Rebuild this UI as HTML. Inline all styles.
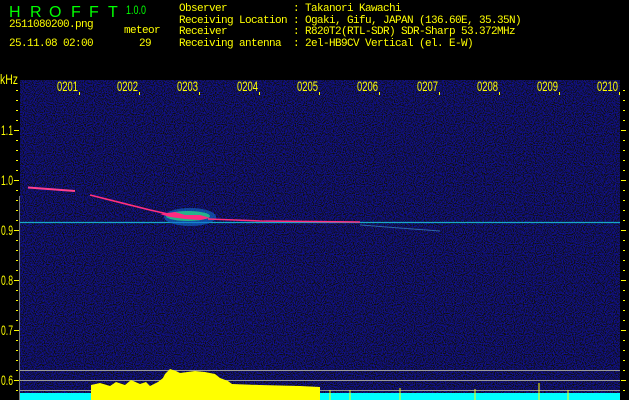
<!DOCTYPE html>
<html><head><meta charset="utf-8"><style>
html,body{margin:0;padding:0;background:#000;width:629px;height:400px;overflow:hidden}
body{position:relative;font-family:"Liberation Mono","DejaVu Sans Mono",monospace;color:#ff0;font-size:11px;letter-spacing:-0.6px}
.t{position:absolute;white-space:pre;line-height:11.5px}
</style></head><body>
<svg width="629" height="400" style="position:absolute;left:0;top:0">
<defs>
<filter id="n" x="0" y="0" width="100%" height="100%">
<feTurbulence type="fractalNoise" baseFrequency="0.9" numOctaves="1" seed="3"/>
<feColorMatrix type="matrix" values="0 0 0 0 0.01  0 0 0 0 0.01  0 0 0 2.8 -1.1  0 0 0 0 1"/>
</filter>
</defs>
<rect x="20" y="80" width="600" height="320" fill="#030318"/>
<rect x="20" y="80" width="600" height="320" filter="url(#n)" opacity="0.6"/>
<line x1="20" y1="222.5" x2="620" y2="222.5" stroke="#1ad0e0" stroke-width="1.2" opacity="0.8"/>
<polyline points="28,187.5 75,191" stroke="#ff4090" stroke-width="2" fill="none"/>
<polyline points="90,195 150,210 168,214" stroke="#ff3080" stroke-width="1.6" fill="none"/>
<ellipse cx="190" cy="217" rx="26" ry="9" fill="#1070d0" opacity="0.6"/>
<ellipse cx="188" cy="216" rx="22" ry="5" fill="#30e080" opacity="0.7"/>
<polygon points="160,214 175,212 185,215 200,215 210,218 200,220 185,219 170,217" fill="#ff2a80"/>
<polyline points="208,219 260,221 360,222" stroke="#ff3080" stroke-width="1.5" fill="none"/>
<polyline points="360,225 440,231" stroke="#40a0e0" stroke-width="1" fill="none" opacity="0.6"/>
<line x1="20" y1="370.5" x2="620" y2="370.5" stroke="#999"/>
<line x1="20" y1="380.5" x2="620" y2="380.5" stroke="#999"/>
<line x1="20" y1="390.5" x2="620" y2="390.5" stroke="#999"/>
<line x1="19.5" y1="196" x2="19.5" y2="400" stroke="#777"/>
<rect x="20" y="393" width="600" height="7" fill="#0ff"/>
<polygon fill="#ff0" points="91,400 91,385 100,383 110,386 116,382 125,385 131,380 140,384 146,382 150,386 158,382 163,378 165,374 170,369 176,371 180,373 195,371 205,372 215,374 220,378 228,381 232,384 260,385 300,386 320,387 320,400"/>
<g stroke="#ff0"><line x1="330" y1="390" x2="330" y2="400"/><line x1="350" y1="390" x2="350" y2="400"/><line x1="400" y1="388" x2="400" y2="400"/><line x1="475" y1="389" x2="475" y2="400"/><line x1="539" y1="383" x2="539" y2="400"/><line x1="568" y1="390" x2="568" y2="400"/></g>
<g stroke="#ff0">
<line x1="79.5" y1="92" x2="79.5" y2="95"/><line x1="139.5" y1="92" x2="139.5" y2="95"/><line x1="199.5" y1="92" x2="199.5" y2="95"/><line x1="259.5" y1="92" x2="259.5" y2="95"/><line x1="319.5" y1="92" x2="319.5" y2="95"/><line x1="379.5" y1="92" x2="379.5" y2="95"/><line x1="439.5" y1="92" x2="439.5" y2="95"/><line x1="499.5" y1="92" x2="499.5" y2="95"/><line x1="559.5" y1="92" x2="559.5" y2="95"/><line x1="619.5" y1="92" x2="619.5" y2="95"/>
</g>
<g fill="#ff0" font-family="Liberation Sans,sans-serif" font-size="14" letter-spacing="0">
<text x="57" y="91" textLength="21" lengthAdjust="spacingAndGlyphs">0201</text><text x="117" y="91" textLength="21" lengthAdjust="spacingAndGlyphs">0202</text><text x="177" y="91" textLength="21" lengthAdjust="spacingAndGlyphs">0203</text><text x="237" y="91" textLength="21" lengthAdjust="spacingAndGlyphs">0204</text><text x="297" y="91" textLength="21" lengthAdjust="spacingAndGlyphs">0205</text><text x="357" y="91" textLength="21" lengthAdjust="spacingAndGlyphs">0206</text><text x="417" y="91" textLength="21" lengthAdjust="spacingAndGlyphs">0207</text><text x="477" y="91" textLength="21" lengthAdjust="spacingAndGlyphs">0208</text><text x="537" y="91" textLength="21" lengthAdjust="spacingAndGlyphs">0209</text><text x="597" y="91" textLength="21" lengthAdjust="spacingAndGlyphs">0210</text>
<text x="0" y="84" textLength="18" lengthAdjust="spacingAndGlyphs">kHz</text>
<text x="1" y="135" textLength="12" lengthAdjust="spacingAndGlyphs">1.1</text><text x="1" y="185" textLength="12" lengthAdjust="spacingAndGlyphs">1.0</text><text x="1" y="235" textLength="12" lengthAdjust="spacingAndGlyphs">0.9</text><text x="1" y="285" textLength="12" lengthAdjust="spacingAndGlyphs">0.8</text><text x="1" y="335" textLength="12" lengthAdjust="spacingAndGlyphs">0.7</text><text x="1" y="385" textLength="12" lengthAdjust="spacingAndGlyphs">0.6</text>
</g>
<g id="ticks" fill="#ff0">
<rect x="16" y="100" width="2" height="1"/><rect x="16" y="110" width="2" height="1"/><rect x="16" y="120" width="2" height="1"/><rect x="14" y="130" width="5" height="1"/><rect x="16" y="140" width="2" height="1"/><rect x="16" y="150" width="2" height="1"/><rect x="16" y="160" width="2" height="1"/><rect x="16" y="170" width="2" height="1"/><rect x="14" y="180" width="5" height="1"/><rect x="16" y="190" width="2" height="1"/><rect x="16" y="200" width="2" height="1"/><rect x="16" y="210" width="2" height="1"/><rect x="16" y="220" width="2" height="1"/><rect x="14" y="230" width="5" height="1"/><rect x="16" y="240" width="2" height="1"/><rect x="16" y="250" width="2" height="1"/><rect x="16" y="260" width="2" height="1"/><rect x="16" y="270" width="2" height="1"/><rect x="14" y="280" width="5" height="1"/><rect x="16" y="290" width="2" height="1"/><rect x="16" y="300" width="2" height="1"/><rect x="16" y="310" width="2" height="1"/><rect x="16" y="320" width="2" height="1"/><rect x="16" y="340" width="2" height="1"/><rect x="16" y="350" width="2" height="1"/><rect x="16" y="360" width="2" height="1"/><rect x="16" y="370" width="2" height="1"/><rect x="14" y="330" width="5" height="1"/><rect x="14" y="380" width="5" height="1"/><rect x="16" y="390" width="2" height="1"/><rect x="16" y="90" width="2" height="1"/>
</g>
<use href="#ticks" x="607"/>
<g fill="#0f0" font-family="Liberation Sans,sans-serif" font-size="16" letter-spacing="0">
<text x="9" y="17">H</text><text x="30" y="17">R</text><text x="49" y="17">O</text><text x="71" y="17">F</text><text x="89" y="17">F</text><text x="108" y="17">T</text>
<text x="126" y="14" font-size="12" textLength="20" lengthAdjust="spacingAndGlyphs">1.0.0</text>
</g>
</svg>
<div class="t" style="left:9px;top:20px">2511080200.png</div>
<div class="t" style="left:124px;top:26px">meteor</div>
<div class="t" style="left:9px;top:39px">25.11.08 02:00</div>
<div class="t" style="left:139px;top:39px">29</div>
<div class="t" style="left:179px;top:4px">Observer           : Takanori Kawachi
Receiving Location : Ogaki, Gifu, JAPAN (136.60E, 35.35N)
Receiver           : R820T2(RTL-SDR) SDR-Sharp 53.372MHz
Receiving antenna  : 2el-HB9CV Vertical (el. E-W)</div>
</body></html>
